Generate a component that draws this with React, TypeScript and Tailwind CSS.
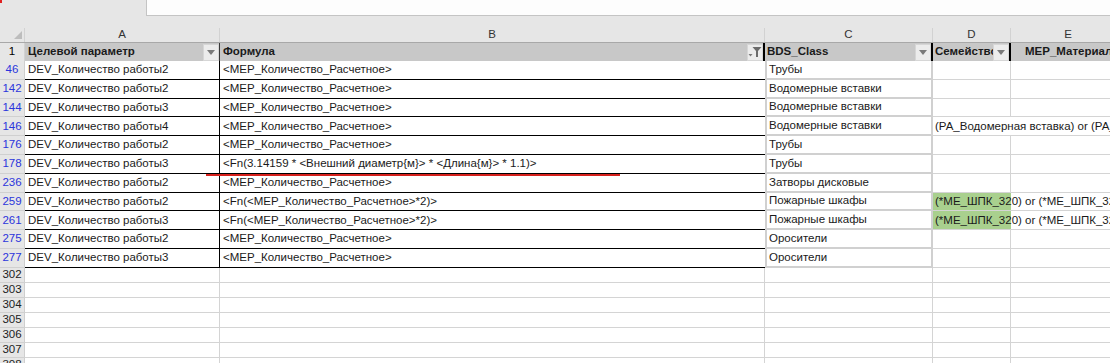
import React from 'react'

type DataRow = {
  n: number
  a: string
  b: string
  c: string
  d?: string
  green?: boolean
}

const QTY = '<MEP_Количество_Расчетное>'

const rows: DataRow[] = [
  { n: 46, a: 'DEV_Количество работы2', b: QTY, c: 'Трубы' },
  { n: 142, a: 'DEV_Количество работы2', b: QTY, c: 'Водомерные вставки' },
  { n: 144, a: 'DEV_Количество работы3', b: QTY, c: 'Водомерные вставки' },
  {
    n: 146,
    a: 'DEV_Количество работы4',
    b: QTY,
    c: 'Водомерные вставки',
    d: '(PA_Водомерная вставка) or (PA_Водомерная вставка)',
  },
  { n: 176, a: 'DEV_Количество работы2', b: QTY, c: 'Трубы' },
  {
    n: 178,
    a: 'DEV_Количество работы3',
    b: '<Fn(3.14159 * <Внешний диаметр{м}> * <Длина{м}> * 1.1)>',
    c: 'Трубы',
  },
  { n: 236, a: 'DEV_Количество работы2', b: QTY, c: 'Затворы дисковые' },
  {
    n: 259,
    a: 'DEV_Количество работы2',
    b: '<Fn(<MEP_Количество_Расчетное>*2)>',
    c: 'Пожарные шкафы',
    d: '(*МЕ_ШПК_320) or (*МЕ_ШПК_320)',
    green: true,
  },
  {
    n: 261,
    a: 'DEV_Количество работы3',
    b: '<Fn(<MEP_Количество_Расчетное>*2)>',
    c: 'Пожарные шкафы',
    d: '(*МЕ_ШПК_320) or (*МЕ_ШПК_320)',
    green: true,
  },
  { n: 275, a: 'DEV_Количество работы2', b: QTY, c: 'Оросители' },
  { n: 277, a: 'DEV_Количество работы3', b: QTY, c: 'Оросители' },
]

const emptyRows = [302, 303, 304, 305, 306, 307, 308]

const DropButton = () => (
  <div className="flex h-[17px] w-[16px] shrink-0 items-center justify-center border border-[#d6d6d6] bg-[#ececec]">
    <svg width="8" height="5" viewBox="0 0 8 5">
      <path d="M0 0h8L4 5z" fill="#7a7a7a" />
    </svg>
  </div>
)

const FilterButton = () => (
  <div className="flex h-[17px] w-[16px] shrink-0 items-center justify-center border border-[#d6d6d6] bg-[#ececec]">
    <svg width="14" height="12" viewBox="0 0 14 12">
      <path d="M0.5 8h4L2.5 10.5z" fill="#7a7a7a" />
      <path d="M4.5 1h9l-3.5 4v6h-2V5z" fill="#6b6b6b" />
    </svg>
  </div>
)

const App: React.FC = () => {
  return (
    <div className="relative h-[363px] w-[1110px] overflow-hidden bg-[#e6e6e6] font-['Liberation_Sans',Arial,sans-serif] text-[11.5px] text-[#1a1a1a]">
      {/* formula bar strip */}
      <div className="flex h-[16px]">
        <div className="w-[146px] shrink-0">
          <div className="h-[3px] w-[2px] bg-[#e02020]" />
        </div>
        <div className="flex-1 border-b border-l border-[#c4c4c4] bg-[#fdfdfd]" />
      </div>
      <div className="h-[12px]" />

      {/* column letters */}
      <div className="flex h-[15px] border-b border-[#a8a8a8] text-[#333]">
        <div className="flex w-[25px] shrink-0 items-end justify-end border-r border-[#d2d2d2] pb-[3px] pr-[2px]">
          <svg width="8" height="8" viewBox="0 0 8 8">
            <path d="M8 0v8H0z" fill="#bdbdbd" />
          </svg>
        </div>
        <div className="flex w-[195px] shrink-0 items-center justify-center border-r border-[#d2d2d2]">A</div>
        <div className="flex w-[545px] shrink-0 items-center justify-center border-r border-[#d2d2d2]">B</div>
        <div className="flex w-[168px] shrink-0 items-center justify-center border-r border-[#d2d2d2]">C</div>
        <div className="flex w-[78px] shrink-0 items-center justify-center border-r border-[#d2d2d2]">D</div>
        <div className="flex w-[114px] shrink-0 items-center justify-center">E</div>
      </div>

      {/* table header row */}
      <div className="flex h-[18px] font-bold">
        <div className="flex w-[25px] shrink-0 items-center justify-center border-r border-[#d2d2d2] font-normal text-black">
          1
        </div>
        <div className="flex w-[195px] shrink-0 items-center justify-between border-r border-[#3a3a3a] bg-[#c8c8c8] pl-[3px]">
          <span>Целевой параметр</span>
          <DropButton />
        </div>
        <div className="flex w-[545px] shrink-0 items-center justify-between border-r-2 border-black bg-[#c8c8c8] pl-[3px]">
          <span>Формула</span>
          <FilterButton />
        </div>
        <div className="flex w-[168px] shrink-0 items-center justify-between border-r-2 border-black bg-[#c8c8c8] pl-[2px]">
          <span>BDS_Class</span>
          <DropButton />
        </div>
        <div className="flex w-[78px] shrink-0 items-center justify-between overflow-hidden border-r-2 border-black bg-[#c8c8c8] pl-[2px]">
          <span className="overflow-hidden whitespace-nowrap">Семейство</span>
          <DropButton />
        </div>
        <div className="flex w-[114px] shrink-0 items-center overflow-hidden whitespace-nowrap bg-[#c8c8c8] pl-[14px]">
          MEP_Материал
        </div>
      </div>

      {/* filtered data rows */}
      {rows.map((r) => (
        <div key={r.n} className="flex h-[18.8px] bg-white">
          <div className="flex w-[25px] shrink-0 items-center justify-center border-b border-r border-b-[#d0d0d0] border-r-[#cfcfcf] bg-[#e6e6e6] text-[#2b35dc]">
            {r.n}
          </div>
          <div className="flex w-[195px] shrink-0 items-center whitespace-nowrap border-b border-r border-black pl-[3px]">
            {r.a}
          </div>
          <div className="flex w-[545px] shrink-0 items-center whitespace-nowrap border-b border-black pl-[3px]">
            {r.b}
          </div>
          <div className="flex w-[168px] shrink-0 items-center whitespace-nowrap border-x-2 border-b-2 border-[#d0d0d0] pl-[2px]">
            {r.c}
          </div>
          <div
            className={
              r.d
                ? r.green
                  ? 'relative z-10 flex w-[78px] shrink-0 items-center whitespace-nowrap border-b border-[#d4d4d4] bg-[#a9d08e] pl-[2px]'
                  : 'relative z-10 flex w-[78px] shrink-0 items-center whitespace-nowrap border-b border-[#d4d4d4] pl-[2px]'
                : 'flex w-[78px] shrink-0 items-center border-b border-r border-[#d4d4d4]'
            }
          >
            {r.d}
          </div>
          <div className="w-[114px] shrink-0 border-b border-[#d4d4d4]" />
        </div>
      ))}

      {/* empty rows */}
      {emptyRows.map((n) => (
        <div key={n} className="flex h-[15px] bg-white">
          <div className="flex w-[25px] shrink-0 items-center justify-center border-b border-r border-b-[#d0d0d0] border-r-[#cfcfcf] bg-[#e6e6e6] text-[#222]">
            {n}
          </div>
          <div className="w-[195px] shrink-0 border-b border-r border-[#d4d4d4]" />
          <div className="w-[545px] shrink-0 border-b border-r border-[#d4d4d4]" />
          <div className="w-[168px] shrink-0 border-b border-r border-[#d4d4d4]" />
          <div className="w-[78px] shrink-0 border-b border-r border-[#d4d4d4]" />
          <div className="w-[114px] shrink-0 border-b border-[#d4d4d4]" />
        </div>
      ))}

      {/* red underline drawn over the sheet */}
      <div className="absolute left-[206px] top-[174px] h-[2px] w-[414px] bg-[#d7201c]" />
    </div>
  )
}

export default App
